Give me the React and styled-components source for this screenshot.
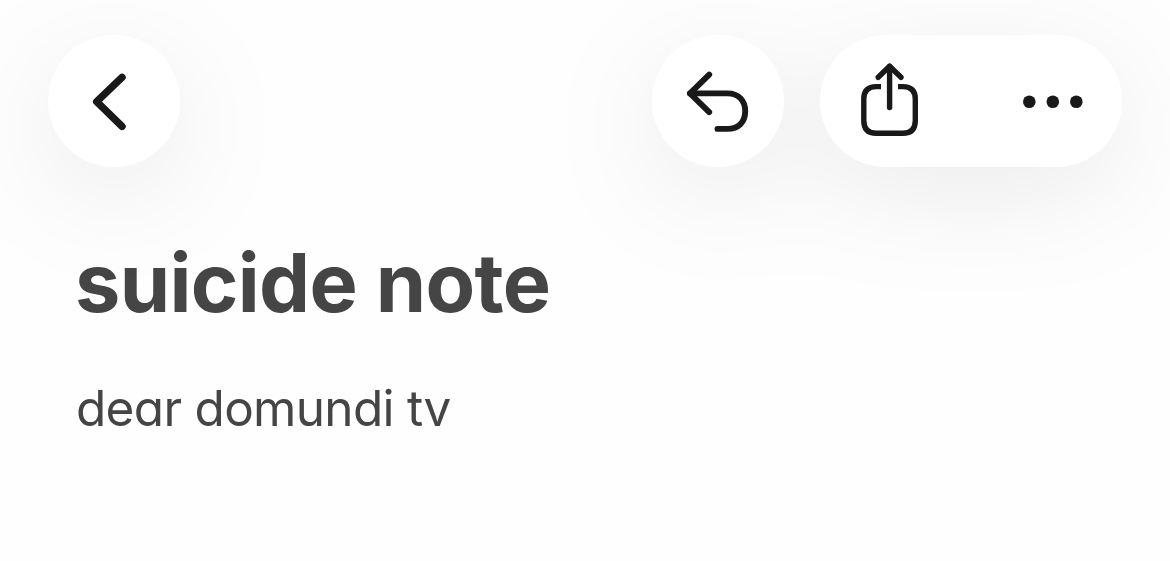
import React from 'react';
import styled, { createGlobalStyle } from 'styled-components';

const GlobalStyle = createGlobalStyle`
  * {
    box-sizing: border-box;
  }
  body {
    margin: 0;
    background-color: #fefefe;
    font-family: Inter, 'Liberation Sans', sans-serif;
  }
`;

const Screen = styled.div`
  height: 561px;
  overflow: hidden;
  background-color: #fefefe;
`;

const Toolbar = styled.header`
  display: flex;
  justify-content: space-between;
  padding: 35px 48px 0;
`;

const Actions = styled.div`
  display: flex;
  gap: 36px;
  filter: drop-shadow(0 26px 54px rgba(0, 0, 0, 0.075));
`;

const Surface = styled.div`
  display: flex;
  gap: 35px;
  height: 132px;
  padding-right: ${({ $wide }) => ($wide ? 3 : 0)}px;
  border-radius: 66px;
  background-color: #fff;
`;

const IconButton = styled.button`
  display: flex;
  width: 132px;
  height: 132px;
  padding: 0;
  border: 0;
  background-color: transparent;
  color: #191919;
  cursor: pointer;
`;

const Icon = styled.svg`
  display: block;
  width: 132px;
  height: 132px;
  flex-shrink: 0;
  fill: none;
  stroke: currentColor;
  stroke-width: ${({ $stroke }) => $stroke};
  stroke-linecap: round;
  stroke-linejoin: round;
`;

const ShareBox = styled.path`
  stroke-linecap: butt;
`;

const Note = styled.main`
  padding: 68px 76px 0;
  color: #454545;
`;

const Title = styled.h1`
  margin: 0 0 0 -1px;
  font-size: 81px;
  font-weight: 700;
  line-height: 96px;
  letter-spacing: -0.65px;
`;

const Paragraph = styled.p`
  margin: 47px 0 0;
  font-size: 49.5px;
  line-height: 60px;
  letter-spacing: -0.7px;
  font-feature-settings: 'cv11' 1;
`;

const BackIcon = () => (
  <Icon viewBox='0 0 132 132' $stroke={7.4}>
    <path d='M74 42.3 48.7 66.7 74 91.3' />
  </Icon>
);

const UndoIcon = () => (
  <Icon viewBox='0 0 132 132' $stroke={5.9}>
    <path d='M57.2 39.6 38 58.4 57.2 77.2' />
    <path d='M38 58.4H75.5C86.5 58.4 93.2 65.5 93.2 76.2S86.5 93.9 75.5 93.9H65.5' />
  </Icon>
);

const ShareIcon = () => (
  <Icon viewBox='0 0 132 132' $stroke={5.4}>
    <ShareBox d='M61 51.6H56.3Q43.8 51.6 43.8 64.1V85.7Q43.8 98.3 56.3 98.3H82.8Q95.3 98.3 95.3 85.7V64.1Q95.3 51.6 82.8 51.6H78' />
    <path d='M69.6 31.5V72.5' />
    <path d='M58.2 42.3 69.6 31.2 81 42.3' />
  </Icon>
);

const MoreIcon = () => (
  <Icon viewBox='0 0 132 132' $stroke={0}>
    <g fill='currentColor'>
      <circle cx='42.3' cy='66.7' r='6.3' />
      <circle cx='65.8' cy='66.7' r='6.3' />
      <circle cx='89.3' cy='66.7' r='6.3' />
    </g>
  </Icon>
);

const App = () => {
  return (
    <>
      <GlobalStyle />
      <Screen>
        <Toolbar>
          <Actions>
            <Surface>
              <IconButton aria-label='Back'>
                <BackIcon />
              </IconButton>
            </Surface>
          </Actions>
          <Actions>
            <Surface>
              <IconButton aria-label='Undo'>
                <UndoIcon />
              </IconButton>
            </Surface>
            <Surface $wide>
              <IconButton aria-label='Share'>
                <ShareIcon />
              </IconButton>
              <IconButton aria-label='More'>
                <MoreIcon />
              </IconButton>
            </Surface>
          </Actions>
        </Toolbar>
        <Note>
          <Title>suicide note</Title>
          <Paragraph>dear domundi tv</Paragraph>
        </Note>
      </Screen>
    </>
  );
};

export default App;
